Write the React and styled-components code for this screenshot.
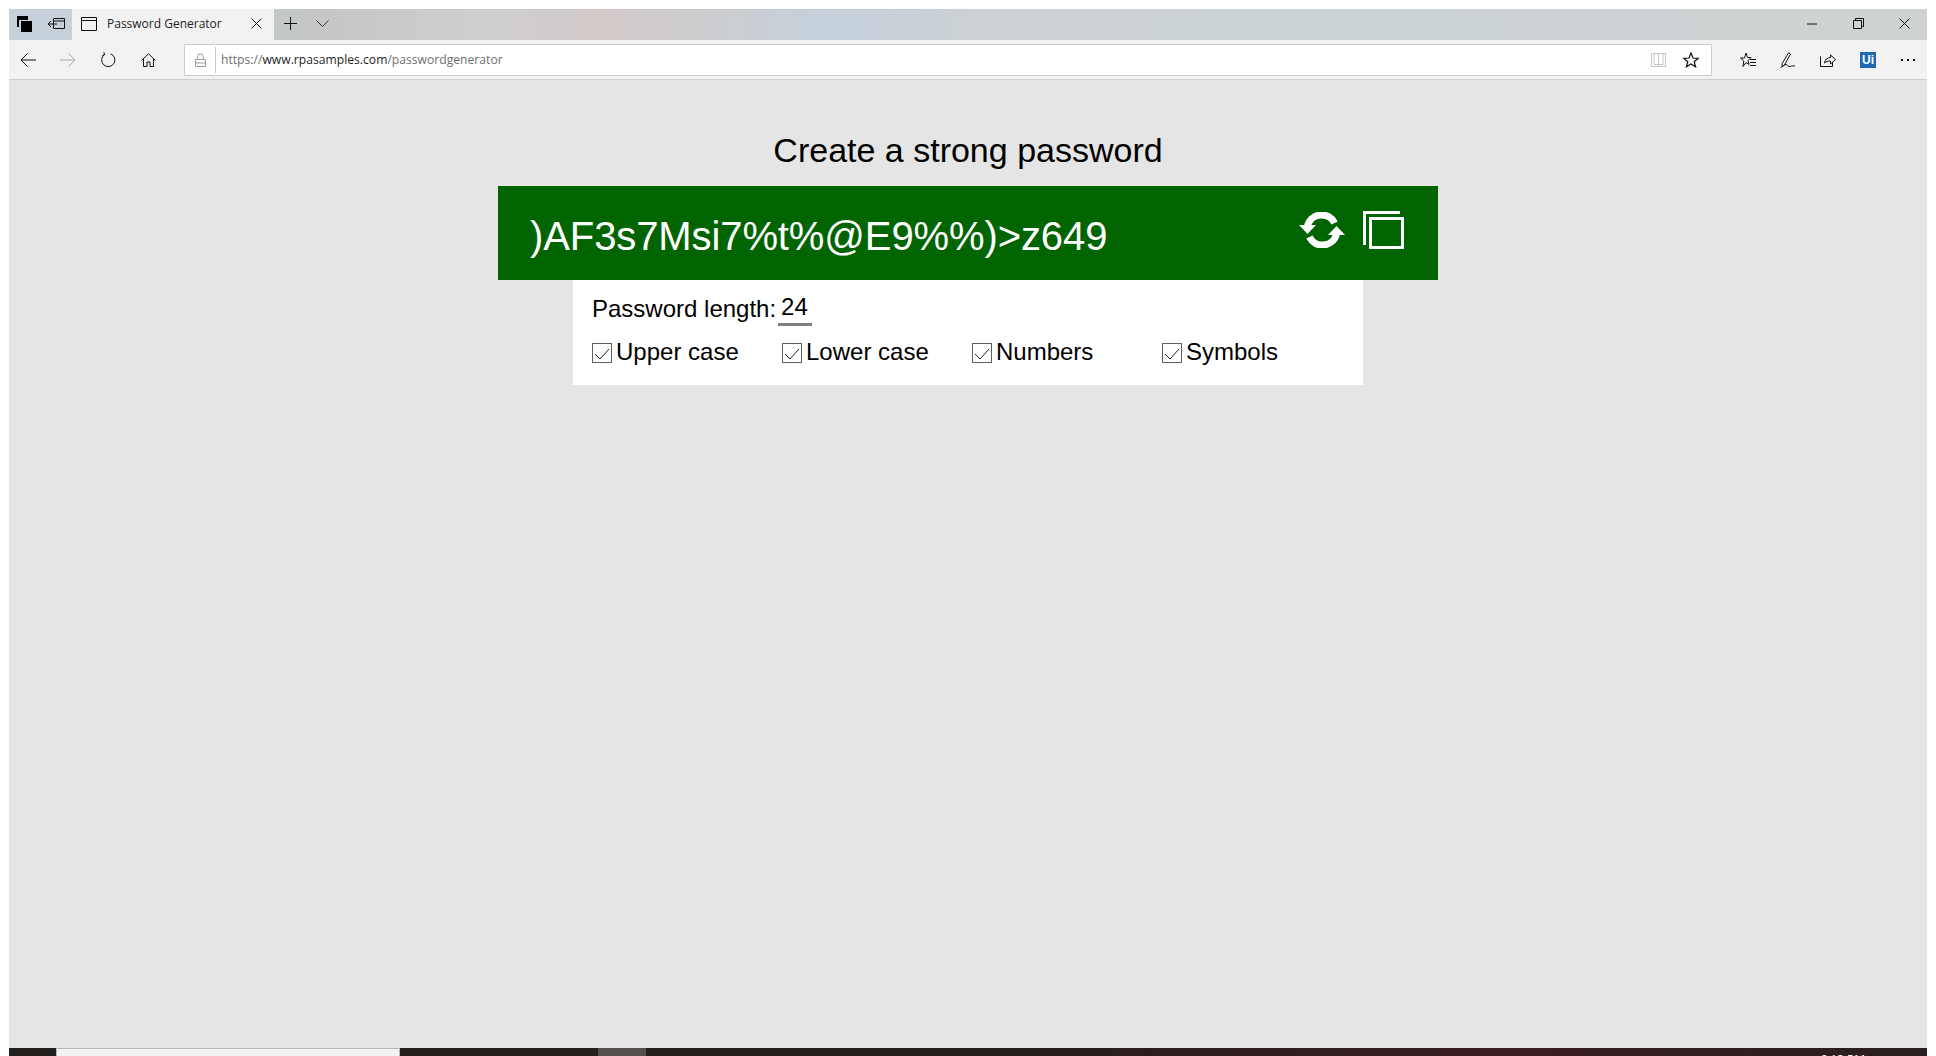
import React from "react";
import styled, { createGlobalStyle } from "styled-components";

const GlobalStyle = createGlobalStyle`
  html, body {
    margin: 0;
    height: 100%;
    background: #fff;
    overflow: hidden;
  }
  #root {
    height: 100%;
  }
`;

const Screen = styled.div`
  box-sizing: border-box;
  height: 1056px;
  padding: 9px 9px 0;
  background: #fff;
`;

const Browser = styled.div`
  display: flex;
  flex-direction: column;
  height: 100%;
  overflow: hidden;
`;

const TabStrip = styled.div`
  display: flex;
  align-items: stretch;
  flex: none;
  height: 31px;
  background: linear-gradient(
    90deg,
    #c6d1dc 0,
    #c6d0d9 70px,
    #c4c6c6 300px,
    #cfcfcf 480px,
    #d3c9c9 590px,
    #cdcdd0 700px,
    #c5d0da 810px,
    #cdd2d4 1000px,
    #cbd3d6 1300px,
    #cfd2d2 1918px
  );
`;

const StripButton = styled.div`
  display: flex;
  align-items: center;
  justify-content: center;
  flex: none;
  box-sizing: border-box;
  width: ${(p) => p.$width}px;
  padding-bottom: 2px;
`;

const Tab = styled.div`
  display: flex;
  align-items: center;
  flex: none;
  box-sizing: border-box;
  width: 202px;
  padding: 0 12px 2px 9px;
  background: #f2f2f2;
`;

const TabTitle = styled.span`
  flex: 1;
  margin-left: 10px;
  font: 12px "Open Sans", sans-serif;
  color: #222;
  white-space: nowrap;
`;

const Spacer = styled.div`
  flex: 1;
`;

const Toolbar = styled.div`
  display: flex;
  align-items: center;
  flex: none;
  box-sizing: border-box;
  height: 40px;
  background: #f2f2f2;
  border-bottom: 1px solid #cfcfcf;
`;

const ToolButton = styled.div`
  display: flex;
  align-items: center;
  justify-content: center;
  flex: none;
  width: 40px;
  height: 32px;
`;

const NavGroup = styled.div`
  display: flex;
  flex: none;
  margin: 0 16px 0 -1px;
`;

const ActionGroup = styled.div`
  display: flex;
  flex: none;
  margin: 0 -1px 0 16px;
`;

const AddressBar = styled.div`
  display: flex;
  align-items: center;
  flex: 1;
  box-sizing: border-box;
  height: 32px;
  padding-left: 10px;
  background: #fff;
  border: 1px solid #cbcbcb;
`;

const Divider = styled.span`
  flex: none;
  width: 1px;
  height: 26px;
  margin: 0 5px 0 9px;
  background: #c8c8c8;
`;

const Url = styled.div`
  flex: 1;
  font: 12.15px "Open Sans", sans-serif;
  color: #707070;
  white-space: nowrap;
`;

const Host = styled.span`
  color: #1f1f1f;
`;

const AddressAction = styled.div`
  display: flex;
  align-items: center;
  justify-content: center;
  flex: none;
  width: ${(p) => p.$width}px;
`;

const UiBadge = styled.div`
  display: flex;
  align-items: center;
  justify-content: center;
  width: 16px;
  height: 16px;
  background: #1f69b3;
  color: #fff;
  font: bold 12px "Liberation Sans", sans-serif;
`;

const Page = styled.main`
  display: flex;
  flex-direction: column;
  align-items: center;
  flex: 1;
  min-height: 0;
  background: #e5e5e5;
  color: #000;
  font-family: "Liberation Sans", Arial, sans-serif;
`;

const Title = styled.h1`
  margin: 0;
  padding-top: 50px;
  height: 56px;
  font-size: 34px;
  font-weight: 400;
  line-height: 40px;
  white-space: nowrap;
`;

const PasswordBar = styled.div`
  display: flex;
  align-items: center;
  justify-content: space-between;
  flex: none;
  box-sizing: border-box;
  width: 940px;
  height: 94px;
  padding: 0 34px 0 32px;
  background: #006400;
  color: #fff;
`;

const PasswordText = styled.div`
  margin-top: 5px;
  font-size: 40px;
  line-height: 46px;
  letter-spacing: -0.1px;
  white-space: nowrap;
`;

const PasswordActions = styled.div`
  display: flex;
  align-items: center;
  gap: 18px;
  margin-top: -6px;
`;

const Options = styled.div`
  display: flex;
  flex-direction: column;
  flex: none;
  box-sizing: border-box;
  width: 790px;
  height: 105px;
  padding: 11px 19px 0;
  background: #fff;
  font-size: 24px;
`;

const LengthRow = styled.label`
  display: flex;
  align-items: flex-start;
  height: 46px;
  line-height: 35px;
`;

const LengthInput = styled.input`
  box-sizing: border-box;
  width: 34px;
  height: 35px;
  margin: 0 0 0 2px;
  padding: 0 0 0 3px;
  border: 0;
  border-bottom: 3px solid #808080;
  outline: 0;
  background: transparent;
  color: #000;
  font: 24px "Liberation Sans", Arial, sans-serif;
  appearance: textfield;

  &::-webkit-inner-spin-button,
  &::-webkit-outer-spin-button {
    appearance: none;
    margin: 0;
  }
`;

const CheckRow = styled.div`
  display: grid;
  grid-template-columns: repeat(4, 190px);
`;

const CheckLabel = styled.label`
  display: flex;
  align-items: center;
  height: 30px;
`;

const CheckBox = styled.span`
  display: flex;
  flex: none;
  box-sizing: border-box;
  width: 20px;
  height: 20px;
  margin: 1px 4px 0 0;
  border: 1px solid #5f5f5f;
  background: #fff;
`;

const Taskbar = styled.footer`
  display: flex;
  flex: none;
  height: 8px;
  overflow: hidden;
  background: linear-gradient(90deg, #231f1c 0, #241f1c 1000px, #3a1d21 1500px, #2c1f1f 1800px, #2a2020 1918px);
`;

const TaskStart = styled.div`
  flex: none;
  width: 47px;
`;

const TaskSearch = styled.div`
  flex: none;
  box-sizing: border-box;
  width: 344px;
  background: #f1f1f1;
  border: 1px solid #b5b5b5;
  border-bottom: 0;
`;

const TaskGap = styled.div`
  flex: none;
  width: 198px;
`;

const TaskActive = styled.div`
  flex: none;
  width: 48px;
  background: #55504c;
`;

const Clock = styled.div`
  margin: 4px 62px 0 0;
  color: #fff;
  font: 12px/16px "Open Sans", sans-serif;
  white-space: nowrap;
`;

const Icon = ({ w = 16, h = 16, color = "#111", sw = 1, children }) => (
  <svg width={w} height={h} viewBox={`0 0 ${w} ${h}`} fill="none" stroke={color} strokeWidth={sw}>
    {children}
  </svg>
);

const RefreshGlyph = () => (
  <svg width="46" height="36" viewBox="0 0 46 36" fill="#fff">
    <g>
      <path d="M8.5 14A14.5 14.5 0 0 1 35.6 11" fill="none" stroke="#fff" strokeWidth="7" />
      <path d="M0 13H17L8.5 22Z" />
    </g>
    <g transform="rotate(180 23 18)">
      <path d="M8.5 14A14.5 14.5 0 0 1 35.6 11" fill="none" stroke="#fff" strokeWidth="7" />
      <path d="M0 13H17L8.5 22Z" />
    </g>
  </svg>
);

const CopyGlyph = () => (
  <svg width="41" height="38" viewBox="0 0 41 38" fill="none" stroke="#fff" strokeWidth="3">
    <path d="M37 1.5H1.5V34" />
    <rect x="7.5" y="7.5" width="32" height="29" />
  </svg>
);

const Check = () => (
  <svg width="18" height="18" viewBox="0 0 18 18" fill="none" stroke="#222" strokeWidth="1">
    <path d="M2 10l5 5 9-10" />
  </svg>
);

const options = ["Upper case", "Lower case", "Numbers", "Symbols"];

export default function App() {
  return (
    <>
      <GlobalStyle />
      <Screen>
        <Browser>
          <TabStrip>
            <StripButton $width={31}>
              <Icon w={15} h={16}>
                <path d="M0 0h11v4H0zM0 4h2v7H0z" fill="#000" stroke="none" />
                <rect x="4" y="5" width="11" height="11" fill="#000" stroke="none" />
              </Icon>
            </StripButton>
            <StripButton $width={32}>
              <Icon w={17} h={11}>
                <path d="M5.5 .5h11v10h-11zM5.5 3h11M0 6h9M3 3L0 6l3 3" />
              </Icon>
            </StripButton>
            <Tab>
              <Icon w={16} h={14}>
                <path d="M.5 .5h15v13H.5zM.5 3.5h15" />
              </Icon>
              <TabTitle>Password Generator</TabTitle>
              <Icon w={11} h={11}>
                <path d="M.5 .5l10 10M10.5 .5l-10 10" />
              </Icon>
            </Tab>
            <StripButton $width={32}>
              <Icon w={13} h={13}>
                <path d="M0 6.5h13M6.5 0v13" />
              </Icon>
            </StripButton>
            <StripButton $width={32}>
              <Icon w={13} h={7} color="#333">
                <path d="M.5 .5l6 6 6-6" />
              </Icon>
            </StripButton>
            <Spacer />
            <StripButton $width={46}>
              <Icon w={10} h={2}>
                <path d="M0 1h10" />
              </Icon>
            </StripButton>
            <StripButton $width={46}>
              <Icon w={11} h={11}>
                <path d="M.5 2.5h8v8h-8zM2.5 2.5v-2h8v8h-2" />
              </Icon>
            </StripButton>
            <StripButton $width={46}>
              <Icon w={11} h={11}>
                <path d="M.5 .5l10 10M10.5 .5l-10 10" />
              </Icon>
            </StripButton>
          </TabStrip>

          <Toolbar>
            <NavGroup>
              <ToolButton>
                <Icon w={16} h={14}>
                  <path d="M16 7H1M7.5 .5L1 7l6.500 6.500" />
                </Icon>
              </ToolButton>
              <ToolButton>
                <Icon w={16} h={14} color="#a8a8a8">
                  <path d="M0 7h15M8.500 .5L15 7l-6.500 6.500" />
                </Icon>
              </ToolButton>
              <ToolButton>
                <Icon w={15} h={15}>
                  <path d="M3.500 2.600a6.600 6.600 0 1 0 6-.8M2.800 .3l.9 2.300-2.300.8" />
                </Icon>
              </ToolButton>
              <ToolButton>
                <Icon w={15} h={14}>
                  <path d="M.5 7.500L7.500 .8l7 6.700M2.500 6v7.500h3.500V9h3v4.500h3.500V6" />
                </Icon>
              </ToolButton>
            </NavGroup>

            <AddressBar>
              <Icon w={11} h={14} color="#9a9a9a">
                <path d="M.5 6.500h10v7H.5zM2.800 6.500V3.500a2.700 2.700 0 0 1 5.400 0v3M.5 10h10" />
              </Icon>
              <Divider />
              <Url>
                https://<Host>www.rpasamples.com</Host>/passwordgenerator
              </Url>
              <AddressAction $width={26}>
                <Icon w={15} h={14} color="#c4c4c4">
                  <path d="M.5 .5h14v13H.5zM7.500 .5v13M3 .5v11h4.500M12 .5v11H7.500" />
                </Icon>
              </AddressAction>
              <AddressAction $width={40}>
                <Icon w={16} h={16} sw={1.2}>
                  <path d="M8 1l2 5 5.300.3-4.100 3.400 1.400 5.100L8 12l-4.600 2.800 1.400-5.100L.7 6.300 6 6z" />
                </Icon>
              </AddressAction>
            </AddressBar>

            <ActionGroup>
              <ToolButton>
                <Icon w={16} h={16}>
                  <path d="M6 1L7.500 5.500L11 5.500 8 8.500 9 12.500 6 10.500 3 14.500 3.800 9 .5 6h4zM10 7.500h6M10 10.500h6M10 13.500h6" />
                </Icon>
              </ToolButton>
              <ToolButton>
                <Icon w={16} h={16}>
                  <path d="M8.500 .8l2 1.300L4.500 13 2 14.500l.2-3zM.5 15.500c2-.5 4-3 5.500-3s1.500 2 3 2 2.500-1 6-.5" />
                </Icon>
              </ToolButton>
              <ToolButton>
                <Icon w={16} h={15}>
                  <path d="M.5 4.500v10h12V10M4.500 11c.5-3.500 3-5.500 6-5.500V3l5 4.500-5 4.500V9c-2.500 0-4.500.5-6 2z" />
                </Icon>
              </ToolButton>
              <ToolButton>
                <UiBadge>Ui</UiBadge>
              </ToolButton>
              <ToolButton>
                <Icon w={14} h={2} sw={2}>
                  <path d="M0 1h2M6 1h2M12 1h2" />
                </Icon>
              </ToolButton>
            </ActionGroup>
          </Toolbar>

          <Page>
            <Title>Create a strong password</Title>
            <PasswordBar>
              <PasswordText>)AF3s7Msi7%t%@E9%%)&gt;z649</PasswordText>
              <PasswordActions>
                <RefreshGlyph />
                <CopyGlyph />
              </PasswordActions>
            </PasswordBar>
            <Options>
              <LengthRow>
                Password length:
                <LengthInput type="number" defaultValue={24} />
              </LengthRow>
              <CheckRow>
                {options.map((name) => (
                  <CheckLabel key={name}>
                    <CheckBox>
                      <Check />
                    </CheckBox>
                    {name}
                  </CheckLabel>
                ))}
              </CheckRow>
            </Options>
          </Page>

          <Taskbar>
            <TaskStart />
            <TaskSearch />
            <TaskGap />
            <TaskActive />
            <Spacer />
            <Clock>6:12 PM</Clock>
          </Taskbar>
        </Browser>
      </Screen>
    </>
  );
}
